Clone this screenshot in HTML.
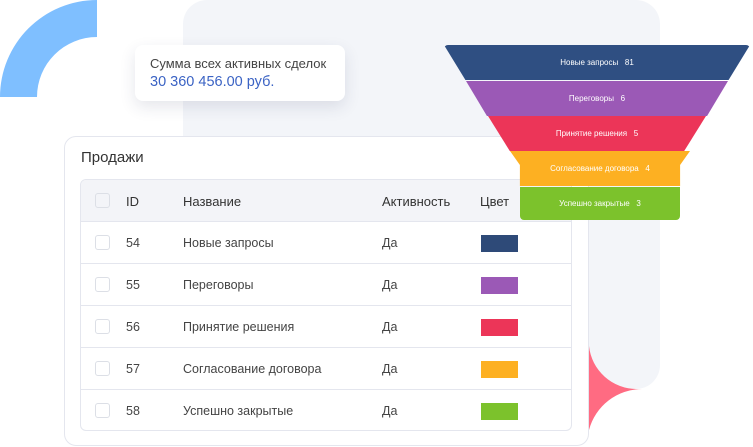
<!DOCTYPE html>
<html><head><meta charset="utf-8"><style>
*{margin:0;padding:0;box-sizing:border-box}
body{width:753px;height:447px;background:#fff;position:relative;overflow:hidden;font-family:"Liberation Sans",sans-serif;color:#333}
.abs{position:absolute}
.gray{left:183px;top:0;width:477px;height:389px;background:#f3f5f9;border-radius:24px}
.sum{left:135px;top:45px;width:210px;height:56px;background:#fff;border-radius:8px;box-shadow:0 6px 16px rgba(40,50,90,.12)}
.sum .a{position:absolute;left:15px;top:11px;font-size:13px;color:#444}
.sum .b{position:absolute;left:15px;top:29px;font-size:14.5px;color:#3b63c4}
.card{left:64px;top:136px;width:525px;height:310px;background:#fff;border:1px solid #e4e6ee;border-radius:12px}
.card h1{position:absolute;left:16px;top:12px;font-size:15px;font-weight:normal;color:#333}
.tbl{left:80px;top:179px;width:492px;height:252px;border:1px solid #e4e6ee;border-radius:6px;overflow:hidden;background:#fff}
.row{position:absolute;left:0;width:100%;height:42px;border-top:1px solid #e4e6ee;font-size:12.5px;color:#444}
.row.h{top:0;border-top:none;background:#f3f4f8;color:#333;font-size:13px}
.row span{position:absolute;top:14px}
.cb{position:absolute;left:14px;top:13px;width:15px;height:15px;border:1px solid #dcdfe6;border-radius:3px;background:#fff}
.h .cb{background:#f3f4f8}
.sw{position:absolute;left:400px;top:13px;width:37px;height:17px}
.band{position:absolute;color:#fff;font-size:8px;text-align:center;line-height:35px;height:35px}
</style></head><body>
<svg class="abs" style="left:0;top:0" width="753" height="447">
<path d="M0,97 A97,97 0 0 1 97,0 L97,37 A60,60 0 0 0 37,97 Z" fill="#7fbfff"/>
</svg>
<div class="abs gray"></div>
<svg class="abs" style="left:0;top:0" width="753" height="447">
<path d="M589,346 A48,48 0 0 0 637,389 L642,389 A55,55 0 0 0 589,430 Z" fill="#ff6b82"/>
</svg>
<div class="abs sum"><div class="a">Сумма всех активных сделок</div><div class="b">30 360 456.00 руб.</div></div>
<div class="abs card"><h1>Продажи</h1></div>
<div class="abs tbl">
<div class="row h"><div class="cb"></div><span style="left:45px">ID</span><span style="left:102px">Название</span><span style="left:301px">Активность</span><span style="left:399px">Цвет</span></div>
<div class="row" style="top:41px"><div class="cb"></div><span style="left:45px">54</span><span style="left:102px">Новые запросы</span><span style="left:301px">Да</span><div class="sw" style="background:#2e4a78"></div></div>
<div class="row" style="top:83px"><div class="cb"></div><span style="left:45px">55</span><span style="left:102px">Переговоры</span><span style="left:301px">Да</span><div class="sw" style="background:#9b59b6"></div></div>
<div class="row" style="top:125px"><div class="cb"></div><span style="left:45px">56</span><span style="left:102px">Принятие решения</span><span style="left:301px">Да</span><div class="sw" style="background:#ec3558"></div></div>
<div class="row" style="top:167px"><div class="cb"></div><span style="left:45px">57</span><span style="left:102px">Согласование договора</span><span style="left:301px">Да</span><div class="sw" style="background:#fdb022"></div></div>
<div class="row" style="top:209px"><div class="cb"></div><span style="left:45px">58</span><span style="left:102px">Успешно закрытые</span><span style="left:301px">Да</span><div class="sw" style="background:#7cc22c"></div></div>
</div>
<div class="band" style="left:444px;top:45px;width:306px;background:#2f4f82;clip-path:polygon(0 0,100% 0,93% 100%,7% 100%);border-radius:4px 4px 0 0">Новые запросы &nbsp; 81</div>
<div class="band" style="left:466px;top:81px;width:262px;background:#9b59b6;clip-path:polygon(0 0,100% 0,92% 100%,8% 100%)">Переговоры &nbsp; 6</div>
<div class="band" style="left:488px;top:116px;width:218px;background:#ec3558;clip-path:polygon(0 0,100% 0,90% 100%,10% 100%)">Принятие решения &nbsp; 5</div>
<div class="band" style="left:510px;top:151px;width:180px;background:#fdb022;clip-path:polygon(0 0,100% 0,94.5% 40%,94.5% 100%,5.5% 100%,5.5% 40%)">Согласование договора &nbsp; 4</div>
<div class="band" style="left:520px;top:187px;width:160px;height:33px;line-height:33px;background:#7cc22c;border-radius:0 0 4px 4px">Успешно закрытые &nbsp; 3</div>
</body></html>
